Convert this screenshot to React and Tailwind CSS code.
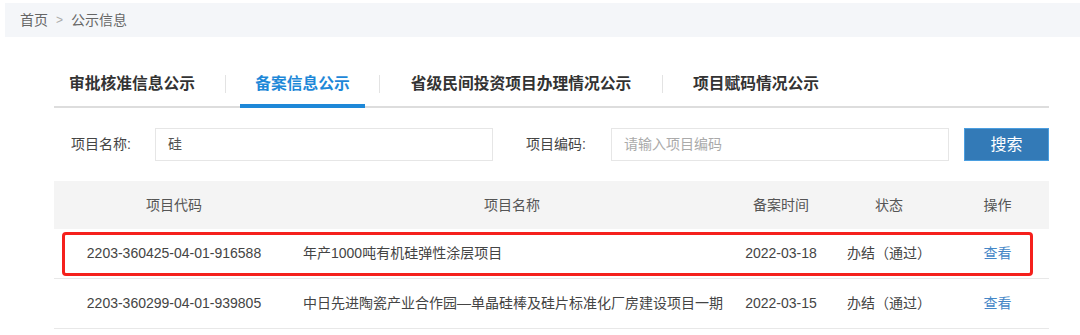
const tabs = [
  { label: "审批核准信息公示", box: "w-[171px] pl-[15px]" },
  { label: "备案信息公示", box: "w-[153px] justify-center", active: true },
  { label: "省级民间投资项目办理情况公示", box: "w-[282px] justify-center" },
  { label: "项目赋码情况公示", box: "pl-[30px]" },
]

const rows = [
  {
    code: "2203-360425-04-01-916588",
    name: "年产1000吨有机硅弹性涂层项目",
    date: "2022-03-18",
    status: "办结（通过）",
    marked: true,
  },
  {
    code: "2203-360299-04-01-939805",
    name: "中日先进陶瓷产业合作园—单晶硅棒及硅片标准化厂房建设项目一期",
    date: "2022-03-15",
    status: "办结（通过）",
  },
]

function App() {
  return (
    <div className="h-[335px] w-[1080px] overflow-hidden bg-white pt-[3px] font-['Liberation_Sans','Noto_Sans_CJK_SC',sans-serif] text-[14px]">
      <div className="ml-[5px] flex h-[34px] items-center bg-[#f4f6f9] pl-[15px] text-[#666]">
        <span>首页</span>
        <span className="mx-[8px] text-[12px] text-[#aaa]">&gt;</span>
        <span>公示信息</span>
      </div>

      <div className="ml-[54px] w-[995px]">
        <div className="mt-[29px] flex h-[42px] border-b-[2px] border-[#dddddd]">
          {tabs.map((tab, i) => (
            <div key={tab.label} className="flex h-full items-center">
              {i > 0 && <span className="mb-[4px] h-[18px] w-px bg-[#e3e3e3]" />}
              <div className={`relative flex h-full items-center pb-[4px] text-[15.75px] font-bold ${tab.box} ${tab.active ? "text-[#1e88d8]" : "text-[#333]"}`}>
                {tab.label}
                {tab.active && <span className="absolute -bottom-[2px] left-[14px] right-[14px] h-[4px] bg-[#1e88d8]" />}
              </div>
            </div>
          ))}
        </div>

        <div className="mt-[20px] flex h-[33px] items-center text-[#444]">
          <span className="ml-[17px] w-[84px]">项目名称:</span>
          <div className="flex h-full w-[338px] items-center border border-[#e6e6e6] pl-[12px] text-[#555]">硅</div>
          <span className="ml-[33px] w-[85px]">项目编码:</span>
          <div className="flex h-full w-[338px] items-center border border-[#e6e6e6] pl-[12px] text-[#aaa]">请输入项目编码</div>
          <button className="ml-[15px] flex h-full w-[85px] items-center justify-center border border-[#4a9ee0] bg-[#337ab7] text-[16px] text-white">
            搜索
          </button>
        </div>

        <div className="relative mt-[20px]">
          <div className="flex h-[48px] items-center bg-[#f4f4f4] text-[#555]">
            <span className="w-[240px] text-center">项目代码</span>
            <span className="w-[436px] text-center">项目名称</span>
            <span className="w-[102px] text-center">备案时间</span>
            <span className="w-[114px] text-center">状态</span>
            <span className="w-[103px] text-center">操作</span>
          </div>
          {rows.map((row) => (
            <div key={row.code} className="relative flex h-[50px] items-center border-b border-[#e8e8e8] text-[#444]">
              <span className="w-[240px] text-center">{row.code}</span>
              <span className="w-[436px] whitespace-nowrap pl-[9px]">{row.name}</span>
              <span className="w-[102px] text-center">{row.date}</span>
              <span className="w-[114px] text-center">{row.status}</span>
              <span className="w-[103px] text-center text-[#4587c7]">查看</span>
              {row.marked && (
                <div className="absolute left-[8px] top-[3px] h-[44px] w-[971px] rounded-[4px] border-[3px] border-[#f5201c]" />
              )}
            </div>
          ))}
        </div>
      </div>
    </div>
  )
}

export default App
